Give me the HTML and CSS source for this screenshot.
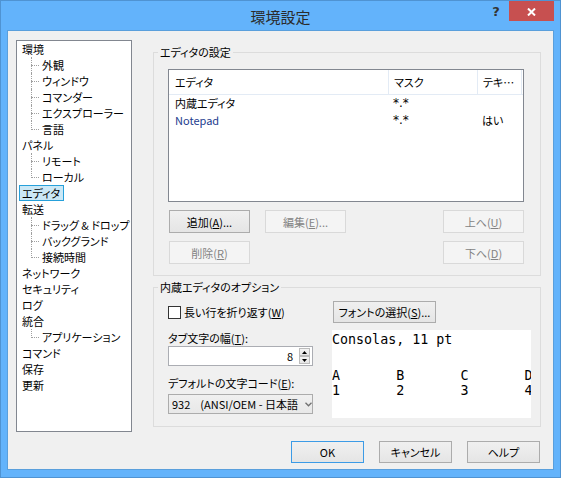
FILE: index.html
```html
<!DOCTYPE html>
<html lang="ja">
<head>
<meta charset="utf-8">
<title>環境設定</title>
<link rel="stylesheet" href="styles.css">
</head>
<body>
<div class="window">
  <div class="titlebar">
    <div class="title">環境設定</div>
    <div class="caption-btns">
      <div class="help">?</div>
      <div class="close"><svg width="9" height="8" viewBox="0 0 9 8"><path d="M1 0.5 L8 7.5 M8 0.5 L1 7.5" stroke="#fff" stroke-width="2" fill="none"/></svg></div>
    </div>
  </div>
  <div class="client">
    <div class="main">
      <ul class="tree">
        <li class="item">環境</li>
        <li class="item child">外観</li>
        <li class="item child">ウィンドウ</li>
        <li class="item child">コマンダー</li>
        <li class="item child">エクスプローラー</li>
        <li class="item child last">言語</li>
        <li class="item">パネル</li>
        <li class="item child">リモート</li>
        <li class="item child last">ローカル</li>
        <li class="item selected">エディタ</li>
        <li class="item">転送</li>
        <li class="item child">ドラッグ &amp; ドロップ</li>
        <li class="item child">バックグランド</li>
        <li class="item child last">接続時間</li>
        <li class="item">ネットワーク</li>
        <li class="item">セキュリティ</li>
        <li class="item">ログ</li>
        <li class="item">統合</li>
        <li class="item child last">アプリケーション</li>
        <li class="item">コマンド</li>
        <li class="item">保存</li>
        <li class="item">更新</li>
      </ul>
      <div class="panel">
        <fieldset class="group">
          <legend>エディタの設定</legend>
          <div class="group-body editors">
            <div class="listview">
              <div class="lv-row lv-head">
                <div class="lv-cell c1">エディタ</div>
                <div class="lv-cell c2">マスク</div>
                <div class="lv-cell c3">テキ…</div>
              </div>
              <div class="lv-row">
                <div class="lv-cell c1">内蔵エディタ</div>
                <div class="lv-cell c2 mask">*.*</div>
                <div class="lv-cell c3"></div>
              </div>
              <div class="lv-row">
                <div class="lv-cell c1 np">Notepad</div>
                <div class="lv-cell c2 mask">*.*</div>
                <div class="lv-cell c3">はい</div>
              </div>
            </div>
            <div class="list-buttons">
              <div class="btn">追加(<u>A</u>)...</div>
              <div class="btn disabled">編集(<u>E</u>)...</div>
              <div class="btn disabled col4">上へ(<u>U</u>)</div>
              <div class="btn disabled">削除(<u>R</u>)</div>
              <div class="btn disabled col4">下へ(<u>D</u>)</div>
            </div>
          </div>
        </fieldset>
        <fieldset class="group second">
          <legend>内蔵エディタのオプション</legend>
          <div class="group-body options">
            <div class="opt-left">
              <div class="check-row">
                <span class="checkbox"></span>
                <span>長い行を折り返す(<u>W</u>)</span>
              </div>
              <div class="label tab-label">タブ文字の幅(<u>T</u>):</div>
              <div class="spin">
                <div class="spin-value">8</div>
                <div class="spin-btns">
                  <div class="spin-btn"><svg width="5" height="3" viewBox="0 0 5 3"><path d="M0 3 L2.5 0 L5 3 Z" fill="#000"/></svg></div>
                  <div class="spin-btn"><svg width="5" height="3" viewBox="0 0 5 3"><path d="M0 0 L2.5 3 L5 0 Z" fill="#000"/></svg></div>
                </div>
              </div>
              <div class="label cp-label">デフォルトの文字コード(<u>E</u>):</div>
              <div class="combo">
                <div class="combo-text"><span class="cp">932</span>(ANSI/OEM - 日本語)</div>
                <svg class="chev" width="7" height="5" viewBox="0 0 7 5"><path d="M0.5 0.8 L3.5 3.8 L6.5 0.8" stroke="#707070" stroke-width="1.3" fill="none"/></svg>
              </div>
            </div>
            <div class="opt-right">
              <div class="btn font-btn">フォントの選択(<u>S</u>)...</div>
              <div class="preview"><div class="pv-line1">Consolas, 11 pt</div><div class="pv-table">A	B	C	D
1	2	3	4</div></div>
            </div>
          </div>
        </fieldset>
      </div>
    </div>
    <div class="footer">
      <div class="btn dlg default">OK</div>
      <div class="btn dlg">キャンセル</div>
      <div class="btn dlg">ヘルプ</div>
    </div>
  </div>
</div>
</body>
</html>
```
FILE: styles.css
```css
* { box-sizing: border-box; }
html, body { margin: 0; padding: 0; }
body {
  font-family: "Noto Sans CJK JP", "Noto Sans", sans-serif;
  font-size: 11px;
  color: #000;
  font-feature-settings: "palt";
}
.window {
  width: 561px;
  height: 478px;
  border: 1px solid #4f93d2;
  background: #63b3fb;
  padding: 0 6px 7px 6px;
  display: flex;
  flex-direction: column;
}
.titlebar {
  height: 29px;
  display: grid;
  grid-template-columns: 1fr auto 1fr;
  align-items: start;
}
.title {
  grid-column: 2;
  font-size: 15px;
  line-height: 20px;
  padding-top: 6px;
  color: #2b2b2b;
  font-feature-settings: normal;
}
.caption-btns {
  grid-column: 3;
  justify-self: end;
  display: flex;
  align-items: flex-start;
}
.help {
  width: 22px;
  margin-right: 2px;
  font-family: "DejaVu Sans", sans-serif;
  font-weight: bold;
  font-size: 13px;
  line-height: 22px;
  text-align: center;
  color: #333;
}
.close {
  width: 45px;
  height: 20px;
  background: #c75050;
  display: flex;
  align-items: center;
  justify-content: center;
  padding-top: 2px;
}
.close svg { display: block; }
.client {
  flex: 1;
  border: 1px solid #5a9fdc;
  background: #f0f0f0;
  display: flex;
  flex-direction: column;
}
.main {
  display: flex;
  align-items: flex-start;
  gap: 21px;
  padding: 9px 12px 0 8px;
}
.tree {
  list-style: none;
  margin: 0;
  padding: 0;
  width: 116px;
  height: 392px;
  flex: none;
  border: 1px solid #828790;
  background: #fff;
  overflow: hidden;
}
.item {
  position: relative;
  width: fit-content;
  height: 16px;
  line-height: 14px;
  border: 1px solid transparent;
  margin-left: 2px;
  padding: 0 3px 0 2px;
  white-space: nowrap;
}
.item.child { padding-left: 22px; }
.item.child::before {
  content: "";
  position: absolute;
  left: 11px;
  top: 7px;
  width: 8px;
  border-top: 1px dotted #a0a0a0;
}
.item.child::after {
  content: "";
  position: absolute;
  left: 11px;
  top: -1px;
  height: 16px;
  border-left: 1px dotted #a0a0a0;
}
.item.child.last::after { height: 9px; }
.item.selected {
  background: #cbe8f6;
  border-color: #26a0da;
}
.panel {
  width: 388px;
  flex: none;
  margin-top: 4px;
  display: flex;
  flex-direction: column;
}
.group {
  margin: 0;
  padding: 0;
  min-width: 0;
  border: 1px solid #dcdcdc;
}
.group.second { margin-top: 3px; }
.group legend {
  margin-left: 4px;
  padding: 0 2px;
  line-height: 16px;
}
.group-body.editors { padding: 9px 16px 11px 14px; }
.listview {
  height: 133px;
  border: 1px solid #828790;
  background: #fff;
}
.lv-row {
  display: grid;
  grid-template-columns: 220px 89px 44px;
  height: 17px;
  line-height: 17px;
}
.lv-cell {
  white-space: nowrap;
  overflow: hidden;
  padding-left: 4px;
}
.lv-cell.c1 { padding-left: 6px; }
.lv-cell.mask {
  font-family: "DejaVu Sans", sans-serif;
  font-size: 12px;
}
.lv-head {
  height: 25px;
  line-height: 24px;
  border-bottom: 1px solid #e3ebf5;
}
.lv-head .lv-cell {
  border-right: 1px solid #e3ebf5;
  padding-left: 5px;
}
.lv-head .lv-cell.c1 { padding-left: 6px; }
.np { color: #1c3b8e; }
.list-buttons {
  display: grid;
  grid-template-columns: 81px 81px 1fr 81px;
  grid-auto-rows: 23px;
  column-gap: 15px;
  row-gap: 8px;
  margin-top: 8px;
  padding-left: 1px;
}
.list-buttons .col4 { grid-column: 4; }
.btn {
  display: flex;
  align-items: center;
  justify-content: center;
  border: 1px solid #acacac;
  background: linear-gradient(#f0f0f0, #e5e5e5);
  white-space: nowrap;
  line-height: 16px;
}
.btn.disabled {
  border-color: #d9d9d9;
  background: #f4f4f4;
  color: #838383;
}
.group-body.options {
  display: flex;
  gap: 19px;
  padding: 6px 9px 8px 14px;
}
.opt-left {
  width: 145px;
  flex: none;
  display: flex;
  flex-direction: column;
}
.check-row {
  height: 22px;
  display: flex;
  align-items: center;
  gap: 3px;
  white-space: nowrap;
}
.checkbox {
  width: 13px;
  height: 13px;
  border: 1px solid #333;
  background: #fff;
  flex: none;
}
.label {
  line-height: 16px;
  white-space: nowrap;
}
.tab-label { margin-top: 7px; }
.cp-label { margin-top: 9px; }
.spin {
  height: 20px;
  border: 1px solid #abadb3;
  background: #fff;
  display: flex;
  align-items: center;
}
.spin-value {
  flex: 1;
  text-align: right;
  padding-right: 6px;
  line-height: 16px;
}
.spin-btns {
  width: 11px;
  margin-right: 2px;
  display: flex;
  flex-direction: column;
}
.spin-btn {
  height: 8px;
  border: 1px solid #bcbcbc;
  background: linear-gradient(#f4f4f4, #e6e6e6);
  display: flex;
  align-items: center;
  justify-content: center;
}
.spin-btn svg { display: block; }
.combo {
  margin-top: 3px;
  height: 20px;
  border: 1px solid #acacac;
  background: linear-gradient(#f0f0f0, #e8e8e8);
  display: flex;
  align-items: center;
  padding-left: 3px;
}
.combo-text {
  width: 126px;
  overflow: hidden;
  white-space: nowrap;
  line-height: 16px;
}
.cp { margin-right: 10px; }
.chev { margin-left: 7px; display: block; }
.opt-right {
  width: 199px;
  flex: none;
  display: flex;
  flex-direction: column;
}
.font-btn {
  width: 103px;
  height: 22px;
  margin-left: 1px;
}
.preview {
  margin-top: 7px;
  height: 88px;
  background: #fff;
  overflow: hidden;
  font-family: "DejaVu Sans Mono", "Liberation Mono", monospace;
  font-size: 13.33px;
  font-feature-settings: normal;
}
.pv-line1 { padding-top: 2px; line-height: 16px; white-space: pre; }
.pv-table { margin-top: 20px; line-height: 15px; white-space: pre; tab-size: 8; }
.footer {
  display: flex;
  justify-content: flex-end;
  gap: 15px;
  margin-top: 9px;
  padding-right: 13px;
}
.btn.dlg {
  width: 73px;
  height: 22px;
}
.btn.default { border-color: #3c9be6; }
```
